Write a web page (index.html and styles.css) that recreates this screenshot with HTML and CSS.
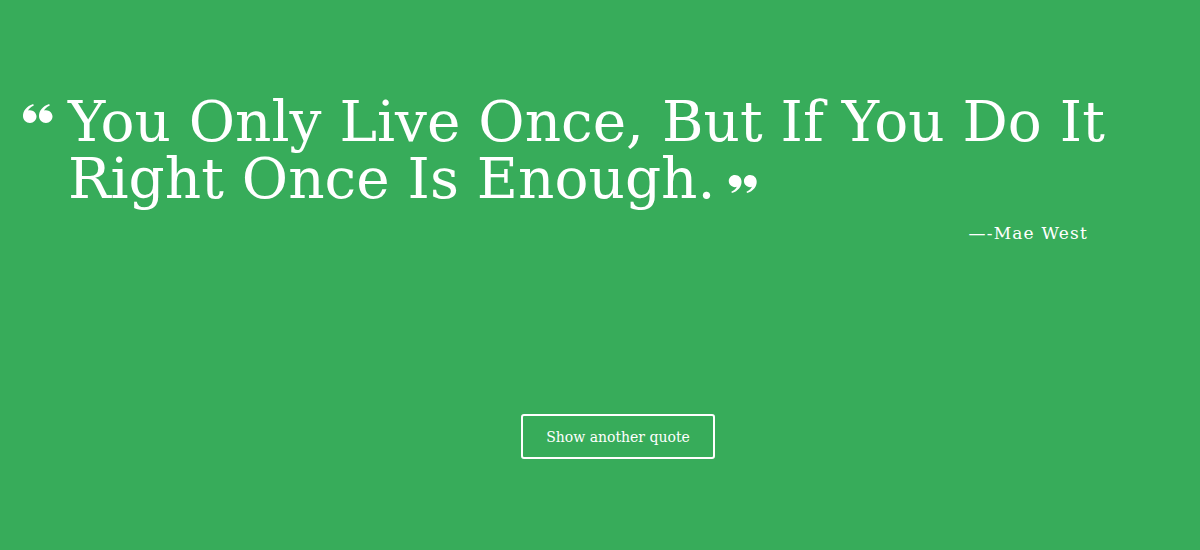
FILE: index.html
```html
<!DOCTYPE html>
<html lang="en">
<head>
<meta charset="utf-8">
<title>Random Quote</title>
<link rel="stylesheet" href="styles.css">
</head>
<body>
<main class="page">
  <section class="quote-box">
    <div class="quote-row">
      <svg class="mark mark-open" viewBox="0 0 30 19" aria-hidden="true">
        <g transform="rotate(180 15 9.5)">
          <path d="M7 0C10.9 0 14 3 14 7C14 12 10.5 16.8 3.8 19L3.2 17.6C6.6 16 8.5 13.8 9 12.4C8.4 12.7 7.7 12.8 7 12.8C3.6 12.8 0.5 10 0.5 6.4C0.5 2.8 3.4 0 7 0Z"/>
          <path transform="translate(16 0)" d="M7 0C10.9 0 14 3 14 7C14 12 10.5 16.8 3.8 19L3.2 17.6C6.6 16 8.5 13.8 9 12.4C8.4 12.7 7.7 12.8 7 12.8C3.6 12.8 0.5 10 0.5 6.4C0.5 2.8 3.4 0 7 0Z"/>
        </g>
      </svg>
      <p class="quote-text">You Only Live Once, But If You Do It Right Once Is Enough.<svg class="mark mark-close" viewBox="0 0 30 19" aria-hidden="true">
          <path d="M7 0C10.9 0 14 3 14 7C14 12 10.5 16.8 3.8 19L3.2 17.6C6.6 16 8.5 13.8 9 12.4C8.4 12.7 7.7 12.8 7 12.8C3.6 12.8 0.5 10 0.5 6.4C0.5 2.8 3.4 0 7 0Z"/>
          <path transform="translate(16 0)" d="M7 0C10.9 0 14 3 14 7C14 12 10.5 16.8 3.8 19L3.2 17.6C6.6 16 8.5 13.8 9 12.4C8.4 12.7 7.7 12.8 7 12.8C3.6 12.8 0.5 10 0.5 6.4C0.5 2.8 3.4 0 7 0Z"/>
        </svg></p>
    </div>
    <p class="author">&mdash;-Mae West</p>
  </section>
  <div class="actions">
    <button class="btn" type="button">Show another quote</button>
  </div>
</main>
</body>
</html>
```

FILE: styles.css
```css
html, body {
  margin: 0;
  padding: 0;
  height: 100%;
}
body {
  background: #37ac5a;
  color: #ffffff;
  font-family: "DejaVu Serif", "Liberation Serif", serif;
}
.page {
  padding: 93px 0 0 22px;
}
.quote-row {
  display: flex;
  align-items: flex-start;
}
.mark {
  fill: #ffffff;
}
.mark-open {
  width: 30px;
  height: 19px;
  flex: none;
  margin: 11px 15px 0 1px;
}
.quote-text {
  margin: 0;
  font-size: 56.5px;
  line-height: 57px;
  max-width: 1100px;
}
.mark-close {
  width: 29px;
  height: 18px;
  margin-left: 13px;
  vertical-align: 5px;
}
.author {
  margin: 16px 0 0 0;
  text-align: right;
  padding-right: 112px;
  font-size: 17px;
  letter-spacing: 1.2px;
}
.actions {
  display: flex;
  justify-content: center;
  padding-left: 14px;
  margin-top: 171px;
}
.btn {
  background: transparent;
  color: #ffffff;
  border: 2px solid #ffffff;
  border-radius: 3px;
  width: 194px;
  height: 45px;
  font-family: "DejaVu Serif", "Liberation Serif", serif;
  font-size: 14px;
  cursor: pointer;
}
```
